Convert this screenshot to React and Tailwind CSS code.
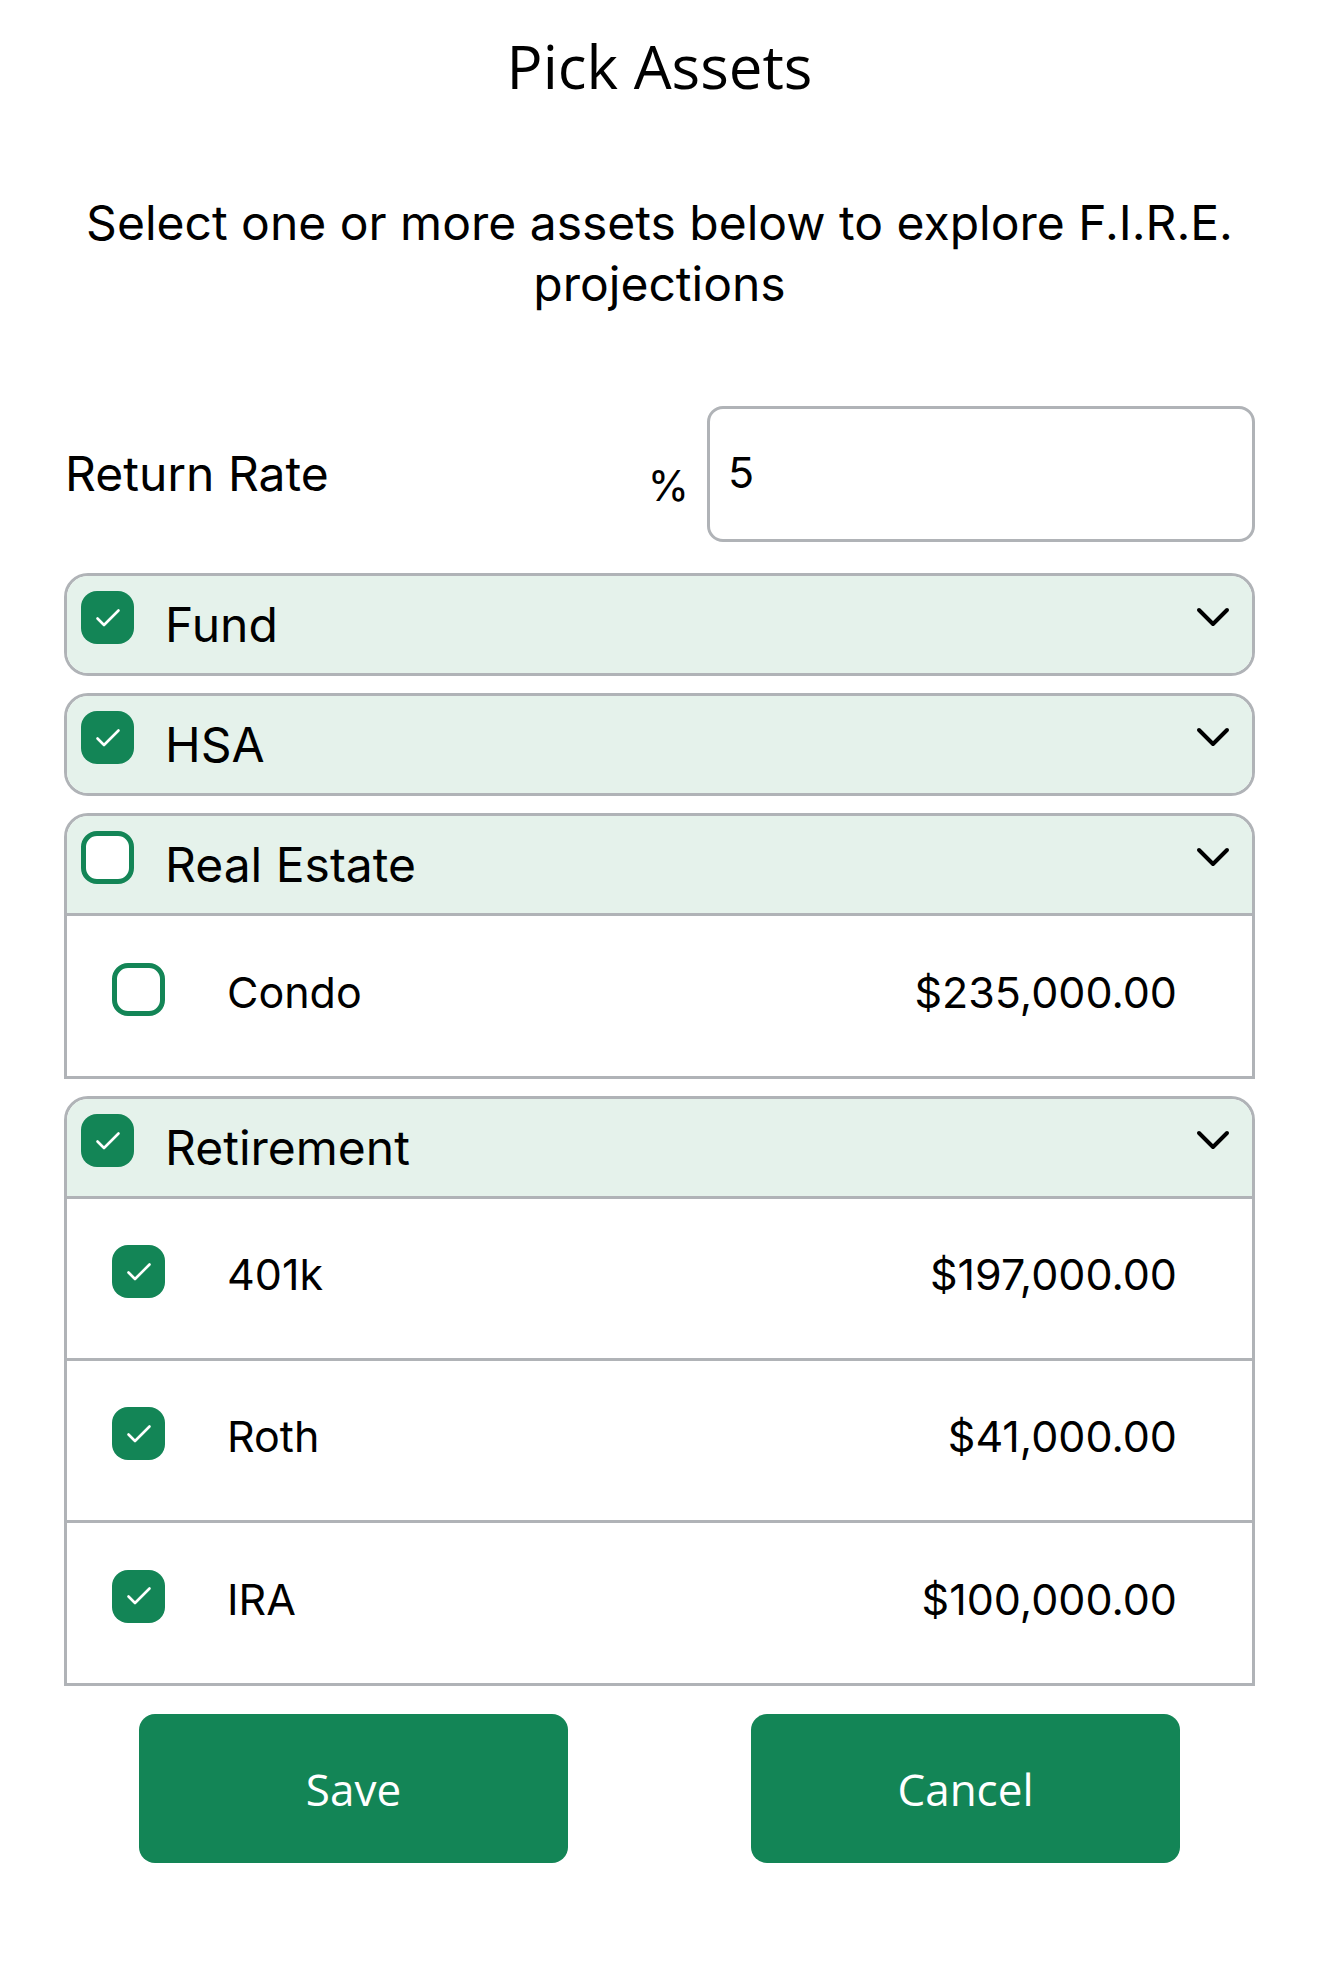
import { useState } from "react";

const groups = [
  { name: "Fund", checked: true, open: false, items: [] },
  { name: "HSA", checked: true, open: false, items: [] },
  {
    name: "Real Estate",
    checked: false,
    open: true,
    items: [{ name: "Condo", amount: "$235,000.00", checked: false }],
  },
  {
    name: "Retirement",
    checked: true,
    open: true,
    items: [
      { name: "401k", amount: "$197,000.00", checked: true },
      { name: "Roth", amount: "$41,000.00", checked: true },
      { name: "IRA", amount: "$100,000.00", checked: true },
    ],
  },
];

// Rounded green checkbox
const Check = ({ checked }) => {
  if (!checked) {
    return <div className="w-[53px] h-[53px] shrink-0 -translate-y-[7px] rounded-[16px] border-[5px] border-[#138556] bg-white" />;
  }
  return (
    <div className="w-[53px] h-[53px] shrink-0 -translate-y-[7px] rounded-[16px] bg-[#138556] flex items-center justify-center">
      <svg width="26" height="20" viewBox="0 0 26 20" fill="none">
        <path d="M2.5 10.5l6.5 6.5L23.5 2.5" stroke="white" strokeWidth="2.6" strokeLinecap="round" strokeLinejoin="round" />
      </svg>
    </div>
  );
};

const Chevron = () => (
  <svg className="-translate-y-[8px]" width="34" height="20" viewBox="0 0 34 20" fill="none">
    <path d="M3 3l14 14L31 3" stroke="black" strokeWidth="4" strokeLinecap="round" strokeLinejoin="round" />
  </svg>
);

const Header = ({ group }) => (
  <div className="h-[97px] flex items-center pl-[14px] pr-[22px] bg-[#e5f2eb]">
    <Check checked={group.checked} />
    <span className="ml-[31px] text-[48px] text-black flex-1">{group.name}</span>
    <Chevron />
  </div>
);

function App() {
  const [rate, setRate] = useState("5");

  return (
    <div className="min-h-screen bg-white pl-[64px] pr-[65px] pt-[30px]" style={{ fontFamily: "Inter, 'Noto Sans', sans-serif" }}>
      <h1 className="text-center text-[60px] leading-[72px] text-black" style={{ fontFamily: "'Open Sans', sans-serif" }}>
        Pick Assets
      </h1>

      <p className="mt-[90px] text-center text-[48px] leading-[61px] text-black">
        Select one or more assets below to explore F.I.R.E. projections
      </p>

      {/* Return rate */}
      <div className="mt-[92px] flex items-center justify-between">
        <span className="text-[48px] text-black pl-[1px]">Return Rate</span>
        <div className="flex items-center">
          <span className="text-[42px] text-black pt-[22px] mr-[18px]">%</span>
          <input
            value={rate}
            onChange={(e) => setRate(e.target.value)}
            className="w-[548px] h-[136px] rounded-[16px] border-[3px] border-[#b0b3b7] pl-[18px] pb-[4px] text-[43px] text-black outline-none"
          />
        </div>
      </div>

      {/* Asset groups */}
      <div className="mt-[31px] flex flex-col gap-[17px]">
        {groups.map((g) =>
          g.open ? (
            <div key={g.name} className="border-[3px] border-[#b0b3b7] rounded-t-[24px] overflow-hidden">
              <div className="border-b-[3px] border-[#b0b3b7]">
                <Header group={g} />
              </div>
              {g.items.map((it, i) => (
                <div
                  key={it.name}
                  className={
                    "flex items-center pl-[45px] pr-[75px] bg-white " +
                    (i < g.items.length - 1 ? "h-[162px] border-b-[3px] border-[#b0b3b7]" : "h-[160px]")
                  }
                >
                  <Check checked={it.checked} />
                  <span className="ml-[62px] flex-1 text-[43px] text-black -translate-y-[4px]">{it.name}</span>
                  <span className="text-[43px] text-black -translate-y-[4px]">{it.amount}</span>
                </div>
              ))}
            </div>
          ) : (
            <div key={g.name} className="border-[3px] border-[#b0b3b7] rounded-[24px] overflow-hidden">
              <Header group={g} />
            </div>
          )
        )}
      </div>

      {/* Actions */}
      <div className="mt-[28px] flex justify-center gap-[183px]" style={{ fontFamily: "'Open Sans', sans-serif" }}>
        <button className="w-[429px] h-[149px] rounded-[16px] bg-[#138556] text-white text-[44px]">Save</button>
        <button className="w-[429px] h-[149px] rounded-[16px] bg-[#138556] text-white text-[44px]">Cancel</button>
      </div>
    </div>
  );
}

export default App;
